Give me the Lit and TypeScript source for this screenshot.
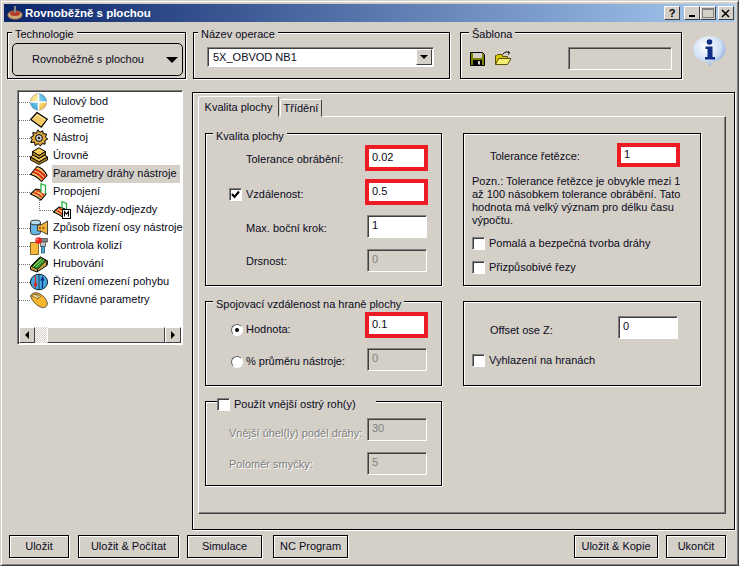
import { LitElement, html, css, svg } from "lit";
import { customElement } from "lit/decorators.js";

const ic: Record<string, unknown> = {
  zero: svg`<defs><radialGradient id="zg" cx=".4" cy=".35" r=".8"><stop offset="0" stop-color="#fff3b0"/><stop offset="1" stop-color="#eeb02e"/></radialGradient><radialGradient id="zb" cx=".5" cy=".4" r=".8"><stop offset="0" stop-color="#8fd6f4"/><stop offset="1" stop-color="#1f8fcf"/></radialGradient></defs><circle cx="8.500" cy="9" r="8.300" fill="url(#zg)" stroke="#7a8a99" stroke-width=".5"/><path d="M8.500 .8a8.200 8.200 0 0 1 8.200 8.200H8.500zM8.500 17.200A8.200 8.200 0 0 1 .3 9h8.200z" fill="url(#zb)"/><path d="M.5 9h16M8.500 1v16" stroke="#fff" stroke-width="1.600"/>`,
  geom: svg`<path d="M.7 8.500 7 1.500l10.300 6.800-6 7.900z" fill="#f3cb62" stroke="#000" stroke-width="1.200"/><path d="M3 8.500 7 3.800l8 5" fill="none" stroke="#ffeeb0"/>`,
  tool: svg`<path d="M8 .8l1.800 2.500 3-1.500.4 3 3.600.2-1.400 3 2.400 2-3 1.700.4 3.400-3.400-.4L10.500 17l-2.400-2.300-3 1.900-.6-3.400-3.700.4 1.300-3.300L.3 8.500l3-1.500L2.800 3.500l3.500.7z" fill="#dca73c" stroke="#000" stroke-width="1"/><circle cx="9" cy="9" r="3.400" fill="#d4d4d4" stroke="#000"/><circle cx="9" cy="9" r="1.300" fill="#222"/>`,
  level: svg`<path d="M9 .8 15.500 4.500 9 8.500 2.500 4.500z" fill="#f3cc5c" stroke="#000"/><path d="M2.500 4.500V7.500L9 11.500l6.500-4V4.500L9 8.500z" fill="#bd9028" stroke="#000" stroke-width=".9"/><path d="M3 8 .5 10 9 15l8.500-5L15 8 9 11.500z" fill="#eec253" stroke="#000"/><path d="M.5 10v3L9 17.500l8.500-4.500v-3L9 15z" fill="#a97d1c" stroke="#000" stroke-width=".9"/>`,
  surf: svg`<path d="M.5 9.500 7 1.500c3 .5 7 3 10 9l-5.500 6c-3-3.500-7-6-11-7z" fill="#f6c65c" stroke="#000" stroke-width="1.100"/><path d="M3 7c3 .6 7 3 10.500 7.500M5 4.500c3 .8 7 3 10.500 7.500" stroke="#e2281e" stroke-width="2" fill="none"/>`,
  link: svg`<path d="M.5 11 6 6c3 .2 7 2 10 5l-5 6c-3-2.500-6.500-4.500-10.500-6z" fill="#f6c65c" stroke="#000" stroke-width="1.100"/><path d="M3.500 9.500c3 .5 6 2.300 8.500 5M6 7.500c3 .5 6.500 2.300 8 5" stroke="#e2281e" stroke-width="1.600" fill="none"/><path d="M11 9.500V.8L15.500 2.500V11" fill="#fff" stroke="#18b030" stroke-width="1.200"/>`,
  entry: svg`<path d="M.5 11 6 6c2 .2 4 1 6 2l-1 9c-3-2.500-6.500-4.500-10.500-6z" fill="#f6c65c" stroke="#000" stroke-width="1.100"/><path d="M3.500 9.500c2 .5 4 1.800 6 4M6 7.500c1 .2 3 1 4 2" stroke="#e2281e" stroke-width="1.600" fill="none"/><path d="M9 8V.8L13.500 2.500V8" fill="none" stroke="#18b030" stroke-width="1.200"/><rect x="9.500" y="8.500" width="8" height="9" fill="#fff" stroke="#000"/><path d="M11.500 15.500v-5l2 2.500 2-2.500v5" fill="none" stroke="#000" stroke-width="1.100"/>`,
  axis: svg`<path d="M.5 3.500v10c0 3 10 3 10 0v-10z" fill="#69b6e2" stroke="#333"/><ellipse cx="5.500" cy="3.500" rx="5" ry="2.300" fill="#b6def2" stroke="#333"/><path d="M17.500 2v13.500L11 12H7.500V6H11z" fill="#f2b33c" stroke="#333" stroke-width=".9"/><circle cx="10" cy="9" r="1.100" fill="#7a4a00"/><circle cx="13.500" cy="9" r="1.100" fill="#7a4a00"/>`,
  coll: svg`<rect x=".5" y="5.500" width="8" height="12" fill="#f6b93e" stroke="#6a5010" stroke-width=".8"/><rect x="7.500" y="1.500" width="10" height="3.500" fill="#888" stroke="#444" stroke-width=".7"/><rect x="10.500" y="5" width="5" height="4.500" fill="#c4c4c4" stroke="#444" stroke-width=".7"/><rect x="11.500" y="9.500" width="3" height="6.500" fill="#4aa8d4" stroke="#1f4a66" stroke-width=".7"/><circle cx="8.500" cy="3.500" r="3.200" fill="#ee2020"/><circle cx="7.500" cy="2.500" r="1" fill="#ff9a9a"/>`,
  rough: svg`<path d="M.5 11.500 10 1.800l7.500 4-.5 4.500L7 17 .5 14.500z" fill="#c9a23c" stroke="#000"/><path d="M1.500 11.500 10.300 2.700l5.700 3.100-8.500 8.500z" fill="#2f8a2c" stroke="#000" stroke-width=".7"/><path d="M4 10.500l8-7.200M6 12l8-7.500M3 12l8-7.500" stroke="#96e05e" stroke-width=".9"/><path d="M7.500 14.500v2.500M16.800 6.500v3.500" stroke="#000"/>`,
  motion: svg`<ellipse cx="9" cy="9" rx="8.600" ry="7.800" fill="#43a9dc" stroke="#123"/><path d="M9 1.200v15.600" stroke="#123" stroke-width=".8"/><path d="M5.500 3v8" stroke="#e01a1a" stroke-width="1.300"/><path d="M3.300 10.500h4.400L5.500 15z" fill="#e01a1a"/><path d="M12.500 15V7" stroke="#0e2a80" stroke-width="1.300"/><path d="M10.300 7.500h4.400L12.500 3z" fill="#0e2a80"/>`,
  extra: svg`<path d="M.5 5C2 1.500 6.500.8 10 3c3.500 1.800 6.500 5 7.300 9 .4 3.500-2.800 5.500-6 4.300C7 15 2 10 .5 5z" fill="#f9b52c" stroke="#333" stroke-width=".8"/><path d="M1.500 5c3-2.200 6.500-2 9 .5L8 7.800C6 6.500 4 6 1.500 5z" fill="#ffe690" stroke="#333" stroke-width=".6"/><path d="M4.500 2.500 9 6.500" stroke="#555" stroke-width=".8"/>`,
};

type Node = { t: string; i: string; sel?: boolean; child?: boolean };
const tree: Node[] = [
  { t: "Nulový bod", i: "zero" },
  { t: "Geometrie", i: "geom" },
  { t: "Nástroj", i: "tool" },
  { t: "Úrovně", i: "level" },
  { t: "Parametry dráhy nástroje", i: "surf", sel: true },
  { t: "Propojení", i: "link" },
  { t: "Nájezdy-odjezdy", i: "entry", child: true },
  { t: "Způsob řízení osy nástroje", i: "axis" },
  { t: "Kontrola kolizí", i: "coll" },
  { t: "Hrubování", i: "rough" },
  { t: "Řízení omezení pohybu", i: "motion" },
  { t: "Přídavné parametry", i: "extra" },
];

@customElement("app-root")
export class AppRoot extends LitElement {
  static styles = css`
    :host { display: block; width: 739px; height: 566px; font: 11px/13px "Liberation Sans", Arial, sans-serif; color: #0a0a20; }
    * { box-sizing: border-box; }
    .win { width: 739px; height: 566px; background: #d4d0c8; border: 1px solid; border-color: #d4d0c8 #404040 #404040 #d4d0c8; box-shadow: inset 1px 1px 0 #fff, inset -1px -1px 0 #808080; padding: 3px 3px 0 3px; display: flex; flex-direction: column; }
    .title { height: 18px; flex: none; background: linear-gradient(90deg, #0a246a, #a6caf0); display: flex; align-items: center; padding: 0 1px 0 3px; gap: 0; color: #fff; font: bold 11.5px "Liberation Sans", Arial, sans-serif; }
    .title svg.app { margin-right: 2px; }
    .title span { flex: 1; }
    .tb { width: 16px; height: 14px; background: #d4d0c8; border: 1px solid; border-color: #fff #404040 #404040 #fff; color: #000; display: flex; align-items: center; justify-content: center; font: bold 11px/12px "Liberation Sans", sans-serif; }
    .tb.q { margin-right: 4px; }
    .tb.x { margin-left: 2px; }
    .tb svg { display: block; }
    .top { display: flex; margin: 10px 0 0 3px; height: 47px; flex: none; }
    .grp { position: relative; border: 1px solid #000; box-shadow: 1px 1px 0 #fff, inset 1px 1px 0 #fff; }
    .legend { position: absolute; top: -6px; left: 7px; background: #d4d0c8; padding: 0 3px; height: 14px; line-height: 14px; white-space: nowrap; }
    .pane .legend { top: -5px; }
    .legend.l4 { left: 4px; }
    .legend.l8 { left: 8px; }
    .tech { width: 179px; padding: 10px 3px 0 4px; }
    .techbox { height: 33px; width: 171px; border: 1px solid #000; border-radius: 5px; display: flex; align-items: center; padding: 0 4px 0 19px; justify-content: space-between; }
    .caret { width: 0; height: 0; border-style: solid; border-width: 6px 6px 0 6px; border-color: #000 transparent transparent; }
    .name { width: 257px; margin-left: 7px; padding: 14px 0 0 13px; }
    .combo { width: 227px; height: 20px; background: #fff; border: 1px solid; border-color: #808080 #fff #fff #808080; box-shadow: inset 1px 1px 0 #404040; display: flex; align-items: center; padding-left: 5px; }
    .combo span { flex: 1; }
    .cbtn { width: 16px; height: 16px; margin-right: 1px; background: #d4d0c8; border: 1px solid; border-color: #fff #404040 #404040 #fff; display: flex; align-items: center; justify-content: center; }
    .cbtn i { border-style: solid; border-width: 4px 4px 0 4px; border-color: #000 transparent transparent; width: 0; height: 0; }
    .tpl { width: 222px; margin-left: 10px; display: flex; align-items: flex-start; padding: 19px 0 0 9px; }
    .tpl svg { display: block; flex: none; }
    .tpl svg.open { margin: -1px 0 0 10px; }
    .ro { width: 104px; height: 23px; margin: -5px 0 0 56px; border: 1px solid; border-color: #808080 #fff #fff #808080; box-shadow: inset 1px 1px 0 #404040; }
    .info { margin: 3px 0 0 11px; flex: none; }
    .main { display: flex; flex: none; margin-top: 11px; height: 440px; }
    .treecol { width: 188px; flex: none; padding-left: 13px; }
    .tree { width: 166px; height: 255px; background: #fff; border: 1px solid; border-color: #808080 #fff #fff #808080; box-shadow: inset 1px 1px 0 #404040; display: flex; flex-direction: column; padding: 2px 1px 0 1px; }
    .nodes { flex: 1; }
    .node { height: 18px; display: flex; align-items: center; white-space: nowrap; }
    .dots { width: 11px; border-top: 1px dotted #777; flex: none; }
    .node svg { flex: none; margin-right: 4px; display: block; }
    .lbl { height: 18px; line-height: 17px; padding: 0 3px 0 1px; }
    .lbl.sel { background: #d4d0c8; }
    .child { padding-left: 20px; }
    .child .dots { width: 14px; position: relative; }
    .child .dots::before { content: ""; position: absolute; left: 0; bottom: 0; height: 17px; border-left: 1px dotted #777; }
    .sb { height: 16px; flex: none; display: flex; align-items: stretch; margin: 0 0 1px 0; }
    .sbtn { width: 16px; background: #d4d0c8; border: 1px solid; border-color: #fff #404040 #404040 #fff; display: flex; align-items: center; justify-content: center; flex: none; }
    .track { width: 12px; flex: none; background: repeating-conic-gradient(#d4d0c8 0 25%, #fff 0 50%) 0 0 / 2px 2px; }
    .thumb { flex: 1; background: #d4d0c8; border: 1px solid; border-color: #fff #404040 #404040 #fff; }
    .tri-l { border-style: solid; border-width: 4px 4px 4px 0; border-color: transparent #000; width: 0; height: 0; }
    .tri-r { border-style: solid; border-width: 4px 0 4px 4px; border-color: transparent #000; width: 0; height: 0; }
    .panel { width: 543px; height: 438px; margin-top: 2px; border: 1px solid #000; box-shadow: 1px 1px 0 #fff, inset 1px 1px 0 #fff; padding: 4px 8px 0 5px; display: flex; flex-direction: column; }
    .tabs { display: flex; height: 20px; flex: none; align-items: flex-end; position: relative; z-index: 1; margin-bottom: -1px; }
    .tab { border: 1px solid; border-color: #fff #404040 transparent #fff; width: 42px; height: 18px; line-height: 17px; border-radius: 2px 2px 0 0; background: #d4d0c8; white-space: nowrap; text-align: center; }
    .tab.on { width: 81px; height: 21px; line-height: 20px; margin-right: 1px; }
    .pane { width: 528px; height: 398px; border: 1px solid; border-color: #fff #404040 #404040 #fff; box-shadow: inset -1px -1px 0 #808080; display: grid; grid-template-columns: 237px 238px; grid-template-rows: 153px 85px 85px; column-gap: 21px; row-gap: 15px; padding: 16px 0 0 6px; }
    .form { display: grid; grid-template-columns: minmax(0, 1fr) 60px; align-items: center; }
    .kv { grid-template-rows: 26px 25px 26px 26px; row-gap: 8px; padding: 11px 14px 0 23px; }
    .kv > :nth-child(n+5) { align-self: end; }
    .kv2 { row-gap: 10px; grid-template-rows: 26px 22px; padding: 10px 14px 0 25px; }
    .rough { padding: 16px 14px 0 23px; row-gap: 11px; grid-template-rows: 23px 22px; }
    .rowlab { display: flex; align-items: center; gap: 4px; padding: 3px 0 0 17px; white-space: nowrap; min-height: 23px; }
    .rowlab.c { padding-left: 0; }
    .rowlab.r { gap: 3px; padding-top: 5px; }
    .rowlab.low { padding-top: 9px; }
    .rowlab.nudge { padding-top: 5px; }
    .rowlab.deep { padding-top: 8px; }
    .rowlab.up { padding-bottom: 2px; }
    .inp { width: 60px; height: 23px; background: #fff; border: 1px solid; border-color: #808080 #fff #fff #808080; box-shadow: inset 1px 1px 0 #404040; padding: 3px 0 0 4px; line-height: 13px; }
    .inp.dis { background: #d4d0c8; color: #808080; }
    .inp.red { width: 63px; height: 26px; border: 4px solid #ed1c24; box-shadow: none; padding: 2px 0 0 3px; margin: 0 -1px 0 -2px; }
    .dim { color: #808080; text-shadow: 1px 1px 0 #fff; }
    .chk { width: 13px; height: 13px; flex: none; background: #fff; border: 1px solid; border-color: #808080 #fff #fff #808080; box-shadow: inset 1px 1px 0 #404040; display: block; }
    .chk svg { display: block; }
    .rad { width: 12px; height: 12px; flex: none; border-radius: 50%; background: #fff; border: 1px solid; border-color: #666 #fff #fff #666; display: flex; align-items: center; justify-content: center; }
    .rad i { width: 4px; height: 4px; background: #000; border-radius: 50%; }
    .legchk { display: flex; align-items: center; gap: 4px; left: 11px; padding: 0 20px 0 0; color: #0a0a20; }
    .rt { padding: 9px 20px 0 8px; }
    .rt-head { display: flex; justify-content: space-between; align-items: center; height: 24px; padding-left: 18px; }
    .rt-head span { padding-top: 3px; }
    .rt-head .inp.red { height: 24px; padding-top: 1px; margin: 0; }
    .note { margin-top: 8px; line-height: 13px; white-space: nowrap; }
    .cl { display: flex; align-items: center; gap: 4px; height: 13px; white-space: nowrap; margin-top: 11px; }
    .note + .cl { margin-top: 10px; }
    .rb { padding: 14px 22px 0 8px; }
    .rb .rt-head { height: 23px; }
    .rb .rt-head span { padding-top: 5px; }
    .rb .cl { margin-top: 15px; }
    .foot { flex: none; display: flex; gap: 8px; margin: 5px 0 0 5px; }
    .btn { height: 23px; border: 1px solid #000; box-shadow: inset 1px 1px 0 #fff, 1px 1px 0 #fff; display: flex; align-items: center; justify-content: center; white-space: nowrap; }
    .w60 { width: 60px; }
    .w101 { width: 101px; margin-left: 1px; }
    .w75 { width: 75px; }
    .w75b { width: 75px; margin-left: 3px; }
    .w84 { width: 84px; margin-left: 218px; }
  `;

  private box(v: string, cls = "") { return html`<div class="inp ${cls}">${v}</div>`; }
  private chk(on = false) {
    return html`<span class="chk">${on ? html`<svg width="11" height="11" viewBox="0 0 11 11"><path d="M2 5l2.500 3L9 2.500" fill="none" stroke="#000" stroke-width="2"/></svg>` : ""}</span>`;
  }

  render() {
    return html`<div class="win">
      <div class="title">
        <svg class="app" width="16" height="16" viewBox="0 0 16 16"><ellipse cx="8" cy="10" rx="7.500" ry="4.500" fill="#c9a77a" stroke="#5a4030" stroke-width=".8"/><ellipse cx="8" cy="8.500" rx="5" ry="2.500" fill="#b8392a"/><path d="M8 1v7" stroke="#888" stroke-width="2"/></svg>
        <span>Rovnoběžně s plochou</span>
        <div class="tb q">?</div>
        <div class="tb"><svg width="8" height="8"><rect x="1" y="6" width="6" height="2" fill="#000"/></svg></div>
        <div class="tb"><svg width="12" height="10"><rect x=".5" y=".5" width="11" height="9" fill="none" stroke="#808080"/><rect x="1" y="1" width="10" height="1" fill="#808080"/></svg></div>
        <div class="tb x"><svg width="10" height="9"><path d="M1 1l7 7M8 1L1 8" stroke="#000" stroke-width="1.500"/></svg></div>
      </div>
      <div class="top">
        <div class="grp tech"><div class="legend l4">Technologie</div>
          <div class="techbox"><span>Rovnoběžně s plochou</span><i class="caret"></i></div></div>
        <div class="grp name"><div class="legend l4">Název operace</div>
          <div class="combo"><span>5X_OBVOD NB1</span><div class="cbtn"><i></i></div></div></div>
        <div class="grp tpl"><div class="legend l8">Šablona</div>
          <svg width="15" height="14" viewBox="0 0 15 14"><path d="M.5.5h12l2 2v11H.5z" fill="#7f7f00" stroke="#000"/><rect x="3" y="1" width="9" height="5" fill="#d4d0c8"/><rect x="3" y="8" width="9" height="5.500" fill="#000"/><rect x="8" y="9" width="2" height="3.500" fill="#d4d0c8"/></svg>
          <svg class="open" width="17" height="15" viewBox="0 0 17 15"><path d="M.5 13.500V4.500h1l1-1h5v2h5v2" fill="#d8c800" stroke="#5a5000"/><path d="M.5 13.500l3-6h12.500l-3.500 6z" fill="#f6ee70" stroke="#5a5000"/><path d="M8 3c1.500-2 4-2.500 6-1.500M14.500 1.500 12.800.2M14.500 1.500l-1 2" fill="none" stroke="#000"/></svg>
          <div class="ro"></div></div>
        <svg class="info" width="33" height="32" viewBox="0 0 33 32"><defs><radialGradient id="ib" cx=".4" cy=".35" r=".75"><stop offset="0" stop-color="#fff"/><stop offset=".6" stop-color="#cfe0f6"/><stop offset="1" stop-color="#6f95cc"/></radialGradient></defs><path d="M16.500 1C8 1 .5 6.500 .5 14s7 13 13 13l4 4.500 1-4.500C26 26.500 32.500 22 32.500 14S25 1 16.500 1z" fill="url(#ib)"/><circle cx="16.500" cy="7" r="2.800" fill="#0f2f86"/><path d="M12.500 11.500h7v10.500H22v2.500H12V22h2.500v-8h-2z" fill="#0f2f86"/></svg>
      </div>
      <div class="main">
        <div class="treecol"><div class="tree">
          <div class="nodes">${tree.map(n => html`<div class="node ${n.child ? "child" : ""}"><span class="dots"></span><svg width="18" height="18" viewBox="0 0 18 18">${ic[n.i]}</svg><span class="lbl ${n.sel ? "sel" : ""}">${n.t}</span></div>`)}</div>
          <div class="sb"><div class="sbtn"><i class="tri-l"></i></div><div class="track"></div><div class="thumb"></div><div class="sbtn"><i class="tri-r"></i></div></div>
        </div></div>
        <div class="panel">
          <div class="tabs"><div class="tab on">Kvalita plochy</div><div class="tab">Třídění</div></div>
          <div class="pane">
            <div class="grp"><div class="legend">Kvalita plochy</div>
              <div class="form kv">
                <div class="rowlab">Tolerance obrábění:</div>${this.box("0.02", "red")}
                <div class="rowlab c nudge">${this.chk(true)}Vzdálenost:</div>${this.box("0.5", "red")}
                <div class="rowlab">Max. boční krok:</div>${this.box("1")}
                <div class="rowlab up">Drsnost:</div>${this.box("0", "dis")}
              </div></div>
            <div class="grp rt">
              <div class="rt-head"><span>Tolerance řetězce:</span>${this.box("1", "red")}</div>
              <div class="note">Pozn.: Tolerance řetězce je obvykle mezi 1<br>až 100 násobkem tolerance obrábění. Tato<br>hodnota má velký význam pro délku času<br>výpočtu.</div>
              <div class="cl">${this.chk()}Pomalá a bezpečná tvorba dráhy</div>
              <div class="cl">${this.chk()}Přizpůsobivé řezy</div>
            </div>
            <div class="grp"><div class="legend">Spojovací vzdálenost na hraně plochy</div>
              <div class="form kv2">
                <div class="rowlab c r low"><span class="rad"><i></i></span>Hodnota:</div>${this.box("0.1", "red")}
                <div class="rowlab c r"><span class="rad"></span>% průměru nástroje:</div>${this.box("0", "dis")}
              </div></div>
            <div class="grp rb">
              <div class="rt-head"><span>Offset ose Z:</span>${this.box("0")}</div>
              <div class="cl">${this.chk()}Vyhlazení na hranách</div>
            </div>
            <div class="grp"><div class="legend legchk">${this.chk()}Použít vnější ostrý roh(y)</div>
              <div class="form rough">
                <div class="rowlab c dim deep">Vnější úhel(ly) podél dráhy:</div>${this.box("30", "dis")}
                <div class="rowlab c dim">Poloměr smyčky:</div>${this.box("5", "dis")}
              </div></div>
          </div>
        </div>
      </div>
      <div class="foot">
        <div class="btn w60">Uložit</div>
        <div class="btn w101">Uložit &amp; Počítat</div>
        <div class="btn w75">Simulace</div>
        <div class="btn w75b">NC Program</div>
        <div class="btn w84">Uložit &amp; Kopie</div>
        <div class="btn w60">Ukončit</div>
      </div>
    </div>`;
  }
}
